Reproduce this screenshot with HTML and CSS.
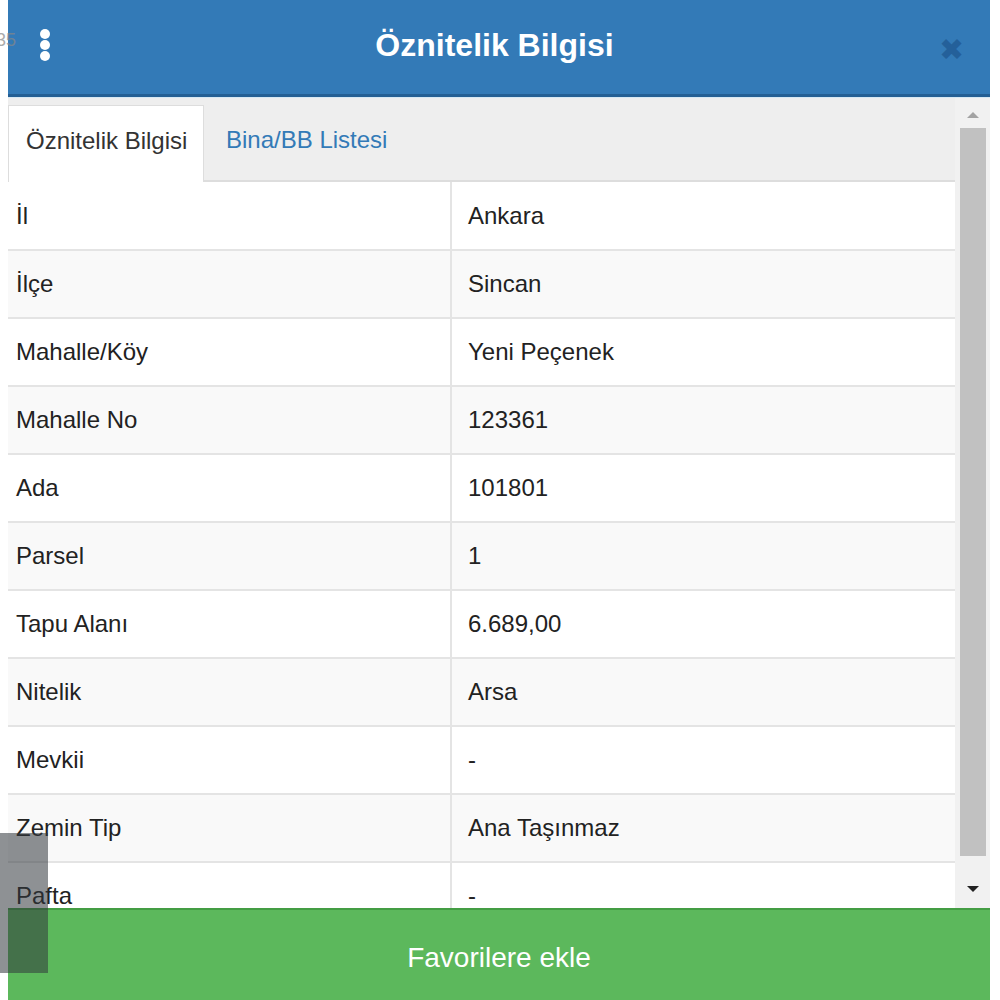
FILE: index.html
```html
<!DOCTYPE html>
<html lang="tr">
<head>
  <meta charset="UTF-8" />
  <meta name="viewport" content="width=device-width, initial-scale=1.0"/>
  <title>Öznitelik Bilgisi</title>
  <link rel="stylesheet" href="styles.css">
</head>
<body>

  <span class="edge-label">35</span>

  <div class="panel">
    <div class="header">
      <span class="menu-dots"><i></i><i></i><i></i></span>
      <h2>Öznitelik Bilgisi</h2>
      <span class="close">&#10006;</span>
    </div>

    <div class="body">
      <div class="content">
        <div class="tabs">
          <div class="tab active">Öznitelik Bilgisi</div>
          <div class="tab">Bina/BB Listesi</div>
        </div>

        <table class="attr-table">
          <tbody>
            <tr><td>İl</td><td>Ankara</td></tr>
            <tr><td>İlçe</td><td>Sincan</td></tr>
            <tr><td>Mahalle/Köy</td><td>Yeni Peçenek</td></tr>
            <tr><td>Mahalle No</td><td>123361</td></tr>
            <tr><td>Ada</td><td>101801</td></tr>
            <tr><td>Parsel</td><td>1</td></tr>
            <tr><td>Tapu Alanı</td><td>6.689,00</td></tr>
            <tr><td>Nitelik</td><td>Arsa</td></tr>
            <tr><td>Mevkii</td><td>-</td></tr>
            <tr><td>Zemin Tip</td><td>Ana Taşınmaz</td></tr>
            <tr><td>Pafta</td><td>-</td></tr>
          </tbody>
        </table>
      </div>

      <div class="scrollbar">
        <span class="arrow up"></span>
        <div class="thumb"></div>
        <span class="arrow down"></span>
      </div>
    </div>

    <button class="fav-btn">Favorilere ekle</button>
  </div>

  <div class="side-overlay"></div>

</body>
</html>
```

FILE: styles.css
```css
* {
  box-sizing: border-box;
  margin: 0;
  padding: 0;
  font-family: "Liberation Sans", Arial, sans-serif;
}
html, body {
  width: 1000px;
  height: 1000px;
  overflow: hidden;
  background: #fff;
}
.edge-label {
  position: absolute;
  left: -4px;
  top: 30px;
  font-size: 18px;
  color: #888;
  z-index: 2;
  opacity: 0.7;
}
.panel {
  margin-left: 8px;
  width: 982px;
  height: 1000px;
  display: flex;
  flex-direction: column;
}
.header {
  height: 97px;
  background: #337ab7;
  border-bottom: 3px solid #245f94;
  box-shadow: 0 2px 0 #d6e8f3;
  display: flex;
  align-items: center;
  justify-content: space-between;
  padding: 0 26px 0 32px;
  flex-shrink: 0;
}
.header h2 {
  color: #fff;
  font-size: 32px;
  font-weight: bold;
  margin-top: -4px;
}
.menu-dots {
  display: flex;
  flex-direction: column;
  gap: 1px;
  margin-top: -4px;
}
.menu-dots i {
  width: 10px;
  height: 10px;
  border-radius: 50%;
  background: #fff;
}
.close {
  color: #24609a;
  font-size: 30px;
  margin-top: 4px;
}
.body {
  flex: 1;
  display: flex;
  overflow: hidden;
  background: #f1f1f1;
  margin-top: 1px;
}
.content {
  flex: 1;
  overflow: hidden;
  background: #fff;
}
.tabs {
  display: flex;
  background: #eee;
  padding-top: 7px;
  height: 84px;
  border-bottom: 2px solid #ddd;
}
.tab {
  padding: 0 18px;
  height: 75px;
  line-height: 70px;
  font-size: 24px;
  color: #337ab7;
  margin-left: 4px;
  white-space: nowrap;
}
.tab.active {
  background: #fff;
  color: #333;
  border: 1px solid #ddd;
  border-bottom: none;
  margin-left: 0;
  width: 196px;
  padding: 0 0 0 17px;
  margin-bottom: -2px;
  height: 77px;
}
.attr-table {
  width: 100%;
  border-collapse: collapse;
  font-size: 24px;
  color: #222;
}
.attr-table td {
  height: 68px;
  border-bottom: 2px solid #e4e4e4;
  padding: 0 8px;
  vertical-align: middle;
}
.attr-table td:first-child {
  width: 443px;
  border-right: 2px solid #e4e4e4;
}
.attr-table td:last-child {
  padding-left: 16px;
}
.attr-table tr:nth-child(even) {
  background: #f9f9f9;
}
.scrollbar {
  width: 35px;
  display: flex;
  flex-direction: column;
  align-items: center;
  padding: 14px 0 16px;
  background: #f1f1f1;
}
.arrow {
  width: 0;
  height: 0;
  border-left: 6px solid transparent;
  border-right: 6px solid transparent;
}
.arrow.up {
  border-bottom: 6px solid #a3a3a3;
}
.arrow.down {
  border-top: 6px solid #222;
}
.thumb {
  width: 26px;
  flex: 1;
  background: #c1c1c1;
  margin: 10px 0 30px;
}
.fav-btn {
  height: 92px;
  flex-shrink: 0;
  background: #5cb85c;
  border: none;
  border-top: 2px solid #449d44;
  color: #fff;
  font-size: 28px;
  padding-top: 6px;
  cursor: pointer;
}
.side-overlay {
  position: absolute;
  left: 0;
  top: 833px;
  width: 48px;
  height: 140px;
  background: rgba(50, 55, 60, 0.55);
}
```
